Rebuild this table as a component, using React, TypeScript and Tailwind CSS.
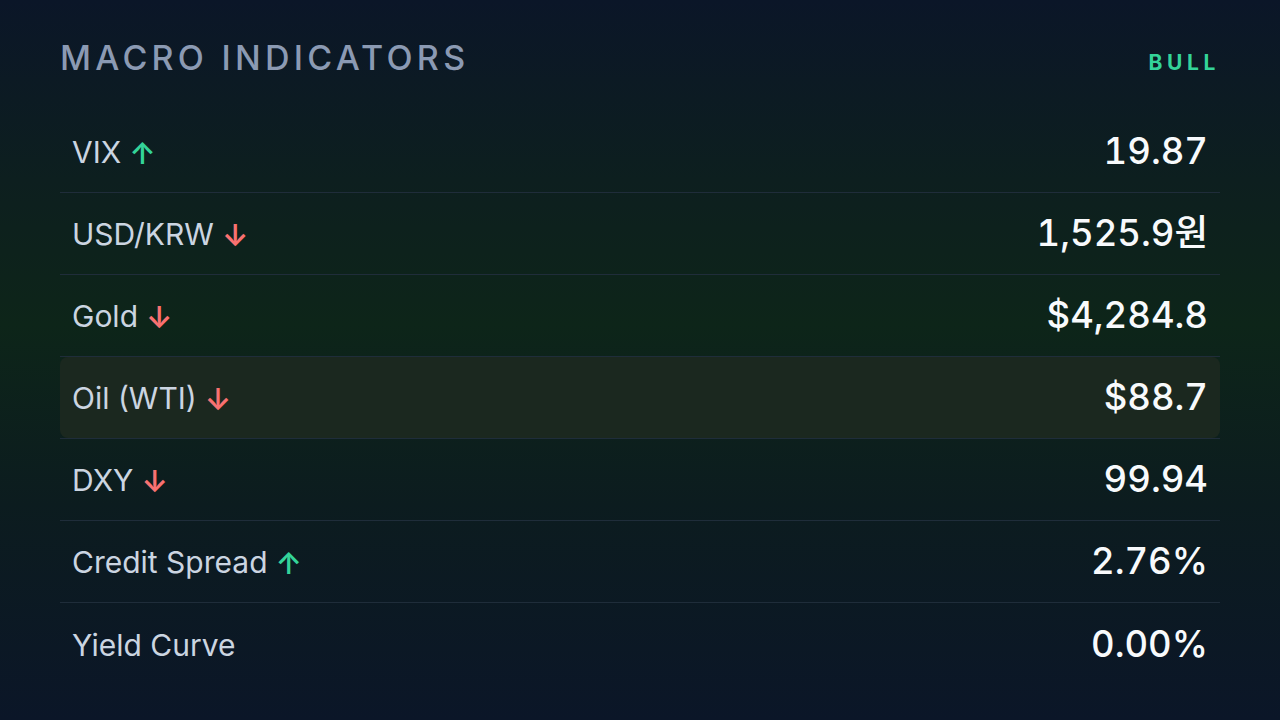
import React from 'react';

type Row = { label: string; value: string; dir?: 'up' | 'down'; active?: boolean };

const rows: Row[] = [
  { label: 'VIX', value: '19.87', dir: 'up' },
  { label: 'USD/KRW', value: '1,525.9원', dir: 'down' },
  { label: 'Gold', value: '$4,284.8', dir: 'down' },
  { label: 'Oil (WTI)', value: '$88.7', dir: 'down', active: true },
  { label: 'DXY', value: '99.94', dir: 'down' },
  { label: 'Credit Spread', value: '2.76%', dir: 'up' },
  { label: 'Yield Curve', value: '0.00%' },
];

export default function App() {
  return (
    <div
      className="w-[1280px] h-[720px] bg-[linear-gradient(180deg,#0b1628_0%,#0d1f1f_25%,#0d2519_45%,#0c1c1f_70%,#0b1628_100%)] px-[60px] pt-[36px]"
      style={{ fontFamily: 'Inter, "Noto Sans CJK KR", sans-serif' }}
    >
      <div className="flex items-center justify-between h-[44px]">
        <h2 className="text-[34px] font-medium tracking-[0.125em] text-[#8b9ab3] leading-none">MACRO INDICATORS</h2>
        <span className="text-[21px] font-bold tracking-[0.22em] text-[#34d399] leading-none mt-2">BULL</span>
      </div>

      <div className="mt-[31px]">
        {rows.map((r, i) => (
          <div
            key={r.label}
            className={`h-[82px] ${i < rows.length - 1 ? 'border-b border-[#1f2d3a]' : ''}`}
          >
            <div
              className={`h-full flex items-center justify-between px-3 rounded-lg ${r.active ? 'bg-[#1b281f]' : ''}`}
            >
              <div className="flex items-center text-[30px] text-[#cbd5e1] pt-[2px]">
                <span>{r.label}</span>
                {r.dir === 'up' && <span className="ml-2 text-[30px] font-semibold text-[#34d399] leading-none">↑</span>}
                {r.dir === 'down' && <span className="ml-2 text-[30px] font-semibold text-[#f87171] leading-none">↓</span>}
              </div>
              <div className="text-[36.5px] font-medium tabular-nums text-[#f8fafc]">{r.value}</div>
            </div>
          </div>
        ))}
      </div>
    </div>
  );
}
